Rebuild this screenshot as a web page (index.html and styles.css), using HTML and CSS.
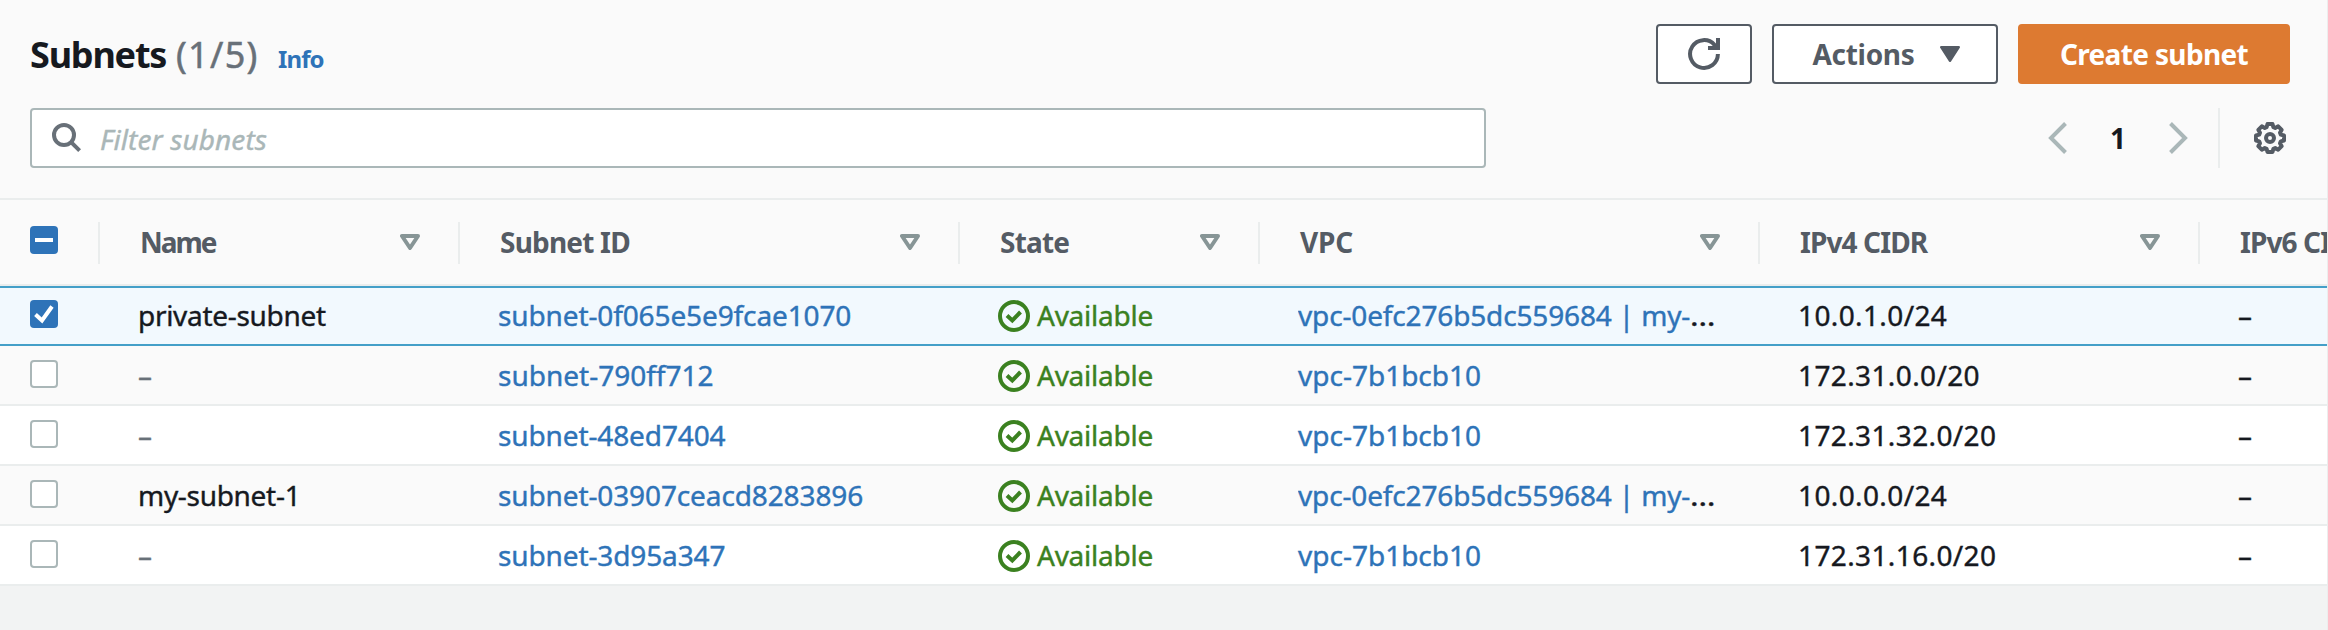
FILE: index.html
```
<!DOCTYPE html>
<html lang="en">
<head>
<meta charset="utf-8">
<title>Subnets</title>
<link rel="stylesheet" href="styles.css">
</head>
<body>
<svg class="sprite" aria-hidden="true">
  <symbol id="sort" viewBox="0 0 20 16"><path d="M2 2h16l-8 12z" fill="none" stroke="currentColor" stroke-width="4" stroke-linejoin="round"/></symbol>
  <symbol id="ok" viewBox="0 0 32 32"><circle cx="16" cy="16" r="14" fill="none" stroke="currentColor" stroke-width="4"/><path d="M9 15.5l5.3 5L22.5 12" fill="none" stroke="currentColor" stroke-width="4"/></symbol>
</svg>
<main class="page">
  <header class="top">
    <div class="title-row">
      <h1 class="title">Subnets</h1>
      <span class="count">(1/5)</span>
      <a class="info">Info</a>
      <div class="actions">
        <button class="btn btn-icon" aria-label="Refresh">
          <svg width="32" height="32" viewBox="0 0 32 32" fill="none" stroke="currentColor" stroke-width="4"><path d="M29.9 16A13.9 13.9 0 1 1 26.5 6.9L29.5 10"/><path d="M30 0v10H20"/></svg>
        </button>
        <button class="btn btn-menu"><span>Actions</span>
          <svg width="20" height="16" viewBox="0 0 20 16"><path d="M1.2 1.2h17.6L10 14.8z" fill="currentColor" stroke="currentColor" stroke-width="2.4" stroke-linejoin="round"/></svg>
        </button>
        <button class="btn btn-primary"><span>Create subnet</span></button>
      </div>
    </div>
    <div class="filter-row">
      <div class="search">
        <svg width="30" height="30" viewBox="0 0 30 30" fill="none" stroke="currentColor" stroke-width="4"><circle cx="12" cy="12" r="10"/><path d="M18.8 18.8l8.8 8.8"/></svg>
        <span class="placeholder">Filter subnets</span>
      </div>
      <div class="pager">
        <svg class="chev" width="20" height="32" viewBox="0 0 20 32"><path d="M17.5 1.5L3 16l14.5 14.5" /></svg>
        <span class="page-no">1</span>
        <svg class="chev" width="20" height="32" viewBox="0 0 20 32"><path d="M2.5 1.5L17 16 2.5 30.5" /></svg>
      </div>
      <div class="settings">
        <svg width="32" height="32" viewBox="0 0 32 32" fill="none" stroke="currentColor" stroke-width="4"><path stroke-linejoin="round" d="M13.5 2h5l.9 3.2 1.8.8 3-1.7 3.5 3.5-1.7 3 .8 1.8 3.2.9v5l-3.2.9-.8 1.8 1.7 3-3.5 3.5-3-1.7-1.8.8-.9 3.2h-5l-.9-3.2-1.8-.8-3 1.7-3.5-3.5 1.7-3-.8-1.8L2 18.500v-5l3.200-.9.8-1.8-1.700-3 3.500-3.500 3 1.700 1.800-.8z"/><circle cx="16" cy="16" r="4"/></svg>
      </div>
    </div>
  </header>

  <section class="table">
    <div class="row head">
      <div class="cell"><span class="box on"><svg width="28" height="28" viewBox="0 0 28 28"><path d="M5 14h18" stroke="#fff" stroke-width="4"/></svg></span></div>
      <div class="cell"><span class="w-name">Name</span><svg class="sort"><use href="#sort"/></svg></div>
      <div class="cell"><span>Subnet ID</span><svg class="sort"><use href="#sort"/></svg></div>
      <div class="cell"><span>State</span><svg class="sort"><use href="#sort"/></svg></div>
      <div class="cell"><span class="w-vpc">VPC</span><svg class="sort"><use href="#sort"/></svg></div>
      <div class="cell"><span class="w-cidr">IPv4 CIDR</span><svg class="sort"><use href="#sort"/></svg></div>
      <div class="cell"><span class="w-cidr">IPv6 CIDR</span></div>
    </div>
    <div class="row selected">
      <div class="cell"><span class="box on"><svg width="28" height="28" viewBox="0 0 28 28"><path d="M5.500 14.500l6.500 6L22 6.500" fill="none" stroke="#fff" stroke-width="4"/></svg></span></div>
      <div class="cell name">private-subnet</div>
      <div class="cell"><a class="id">subnet-0f065e5e9fcae1070</a></div>
      <div class="cell state"><svg class="ok"><use href="#ok"/></svg>Available</div>
      <div class="cell"><div class="clip"><a>vpc-0efc276b5dc559684 | my-</a><span class="dots">…</span></div></div>
      <div class="cell cidr">10.0.1.0/24</div>
      <div class="cell">–</div>
    </div>
    <div class="row alt">
      <div class="cell"><span class="box"></span></div>
      <div class="cell none">–</div>
      <div class="cell"><a>subnet-790ff712</a></div>
      <div class="cell state"><svg class="ok"><use href="#ok"/></svg>Available</div>
      <div class="cell"><a>vpc-7b1bcb10</a></div>
      <div class="cell cidr">172.31.0.0/20</div>
      <div class="cell">–</div>
    </div>
    <div class="row">
      <div class="cell"><span class="box"></span></div>
      <div class="cell none">–</div>
      <div class="cell"><a class="id">subnet-48ed7404</a></div>
      <div class="cell state"><svg class="ok"><use href="#ok"/></svg>Available</div>
      <div class="cell"><a>vpc-7b1bcb10</a></div>
      <div class="cell cidr">172.31.32.0/20</div>
      <div class="cell">–</div>
    </div>
    <div class="row alt">
      <div class="cell"><span class="box"></span></div>
      <div class="cell name">my-subnet-1</div>
      <div class="cell"><a class="id">subnet-03907ceacd8283896</a></div>
      <div class="cell state"><svg class="ok"><use href="#ok"/></svg>Available</div>
      <div class="cell"><div class="clip"><a>vpc-0efc276b5dc559684 | my-</a><span class="dots">…</span></div></div>
      <div class="cell cidr">10.0.0.0/24</div>
      <div class="cell">–</div>
    </div>
    <div class="row">
      <div class="cell"><span class="box"></span></div>
      <div class="cell none">–</div>
      <div class="cell"><a class="id">subnet-3d95a347</a></div>
      <div class="cell state"><svg class="ok"><use href="#ok"/></svg>Available</div>
      <div class="cell"><a>vpc-7b1bcb10</a></div>
      <div class="cell cidr">172.31.16.0/20</div>
      <div class="cell">–</div>
    </div>
  </section>
</main>
</body>
</html>
```
FILE: styles.css
```
* { box-sizing: border-box; }

body {
  margin: 0;
  background: #f2f3f3;
  color: #16191f;
  font: 28px/40px "Noto Sans", "Open Sans", sans-serif;
  overflow: hidden;
}

.sprite { position: absolute; width: 0; height: 0; }

a { color: #2e73b8; text-decoration: none; }

.page { height: 630px; overflow: hidden; border-right: 1px solid #ededed; }

/* Toolbar */
.top {
  height: 200px;
  padding: 24px 37px 0 30px;
  background: #fafafa;
  border-bottom: 2px solid #eaeded;
}

.title-row { display: flex; height: 60px; white-space: nowrap; }

.title {
  margin: 6px 0 0;
  width: 146px;
  font-size: 36px;
  line-height: 50px;
  letter-spacing: -1.2px;
}

.count {
  width: 102px;
  padding-top: 6px;
  font-size: 36px;
  line-height: 50px;
  letter-spacing: 1.3px;
  color: #687078;
  -webkit-text-stroke: 0.5px currentColor;
}

.info {
  padding-top: 15px;
  font-size: 24px;
  line-height: 40px;
  font-weight: 700;
  letter-spacing: -0.9px;
}

.actions { display: flex; gap: 20px; margin-left: auto; }

.btn {
  display: flex;
  align-items: center;
  justify-content: center;
  height: 60px;
  padding: 0 0 1px;
  border: 2px solid #545b64;
  border-radius: 4px;
  background: #fff;
  color: #545b64;
  font: inherit;
  font-weight: 700;
}

.btn-icon { width: 96px; padding: 0; }
.btn-menu { width: 226px; padding-left: 2px; gap: 25px; letter-spacing: -0.3px; }
.btn-primary {
  width: 272px;
  border-color: #dd7a31;
  background: #dd7a31;
  color: #fff;
  letter-spacing: -0.65px;
}

.filter-row { display: flex; height: 60px; margin-top: 24px; }

.search {
  display: flex;
  align-items: center;
  width: 1456px;
  padding-left: 20px;
  border: 2px solid #aab7b8;
  border-radius: 4px;
  background: #fff;
  color: #687078;
}

.placeholder {
  margin-left: 18px;
  padding-top: 2px;
  font-style: italic;
  letter-spacing: 0.1px;
  color: #aab7b8;
  -webkit-text-stroke: 0.4px currentColor;
}

.pager {
  display: flex;
  align-items: center;
  width: 140px;
  margin-left: auto;
  justify-content: space-between;
}

.chev { fill: none; stroke: #aab7b8; stroke-width: 4; }
.page-no { padding-bottom: 1px; font-weight: 700; }

.settings {
  display: flex;
  align-items: center;
  width: 72px;
  margin-left: 30px;
  padding-left: 34px;
  border-left: 2px solid #eaeded;
  color: #545b64;
}

/* Table */
.row {
  display: grid;
  grid-template-columns: 100px 360px 500px 300px 500px 440px 1fr;
  height: 60px;
  background: #fff;
  border-bottom: 2px solid #eaeded;
  white-space: nowrap;
  -webkit-text-stroke: 0.4px currentColor;
}

.row.alt { background: #fafafa; }

.row.selected {
  background: #f2f9fe;
  border-top: 2px solid #449fc8;
  border-bottom-color: #449fc8;
}

.cell { padding: 9px 0 0 38px; min-width: 0; overflow: hidden; }
.selected .cell { padding-top: 7px; }
.cell:first-child { padding-left: 30px; }

.row .cell:first-child { padding-top: 14px; }
.row.selected .cell:first-child { padding-top: 12px; }

.box {
  display: block;
  width: 28px;
  height: 28px;
  border: 2px solid #aab7b8;
  border-radius: 4px;
  background: #fff;
}

.box.on { border: 0; background: #2e73b8; }
.box svg { display: block; }

.name { letter-spacing: -0.3px; }
.id { letter-spacing: -0.12px; }
.none { color: #687078; }
.cidr { letter-spacing: 0.38px; }

.state { display: flex; color: #3b8120; letter-spacing: -0.25px; }
.ok { width: 32px; height: 32px; margin: 5px 7px 0 0; }

.clip { width: 424px; overflow: hidden; letter-spacing: -0.15px; }
.dots { display: inline-block; transform: scaleX(1.15); transform-origin: left; }

.row.head {
  height: 86px;
  padding: 22px 0;
  background: #fafafa;
  color: #545b64;
  font-weight: 700;
  letter-spacing: -0.8px;
  -webkit-text-stroke: 0;
}

.row.head .cell {
  display: flex;
  justify-content: space-between;
  align-items: flex-start;
  height: 42px;
  padding: 0 38px 0 40px;
  border-right: 2px solid #eaeded;
}

.row.head .cell:first-child { padding: 4px 0 0 30px; }
.row.head .cell:last-child { border: 0; padding-right: 0; }

.head .w-name { letter-spacing: -2px; }
.head .w-vpc { letter-spacing: -0.2px; }
.head .w-cidr { letter-spacing: -0.9px; }

.sort { flex: none; width: 20px; height: 16px; margin-top: 12px; color: #879596; }
```
